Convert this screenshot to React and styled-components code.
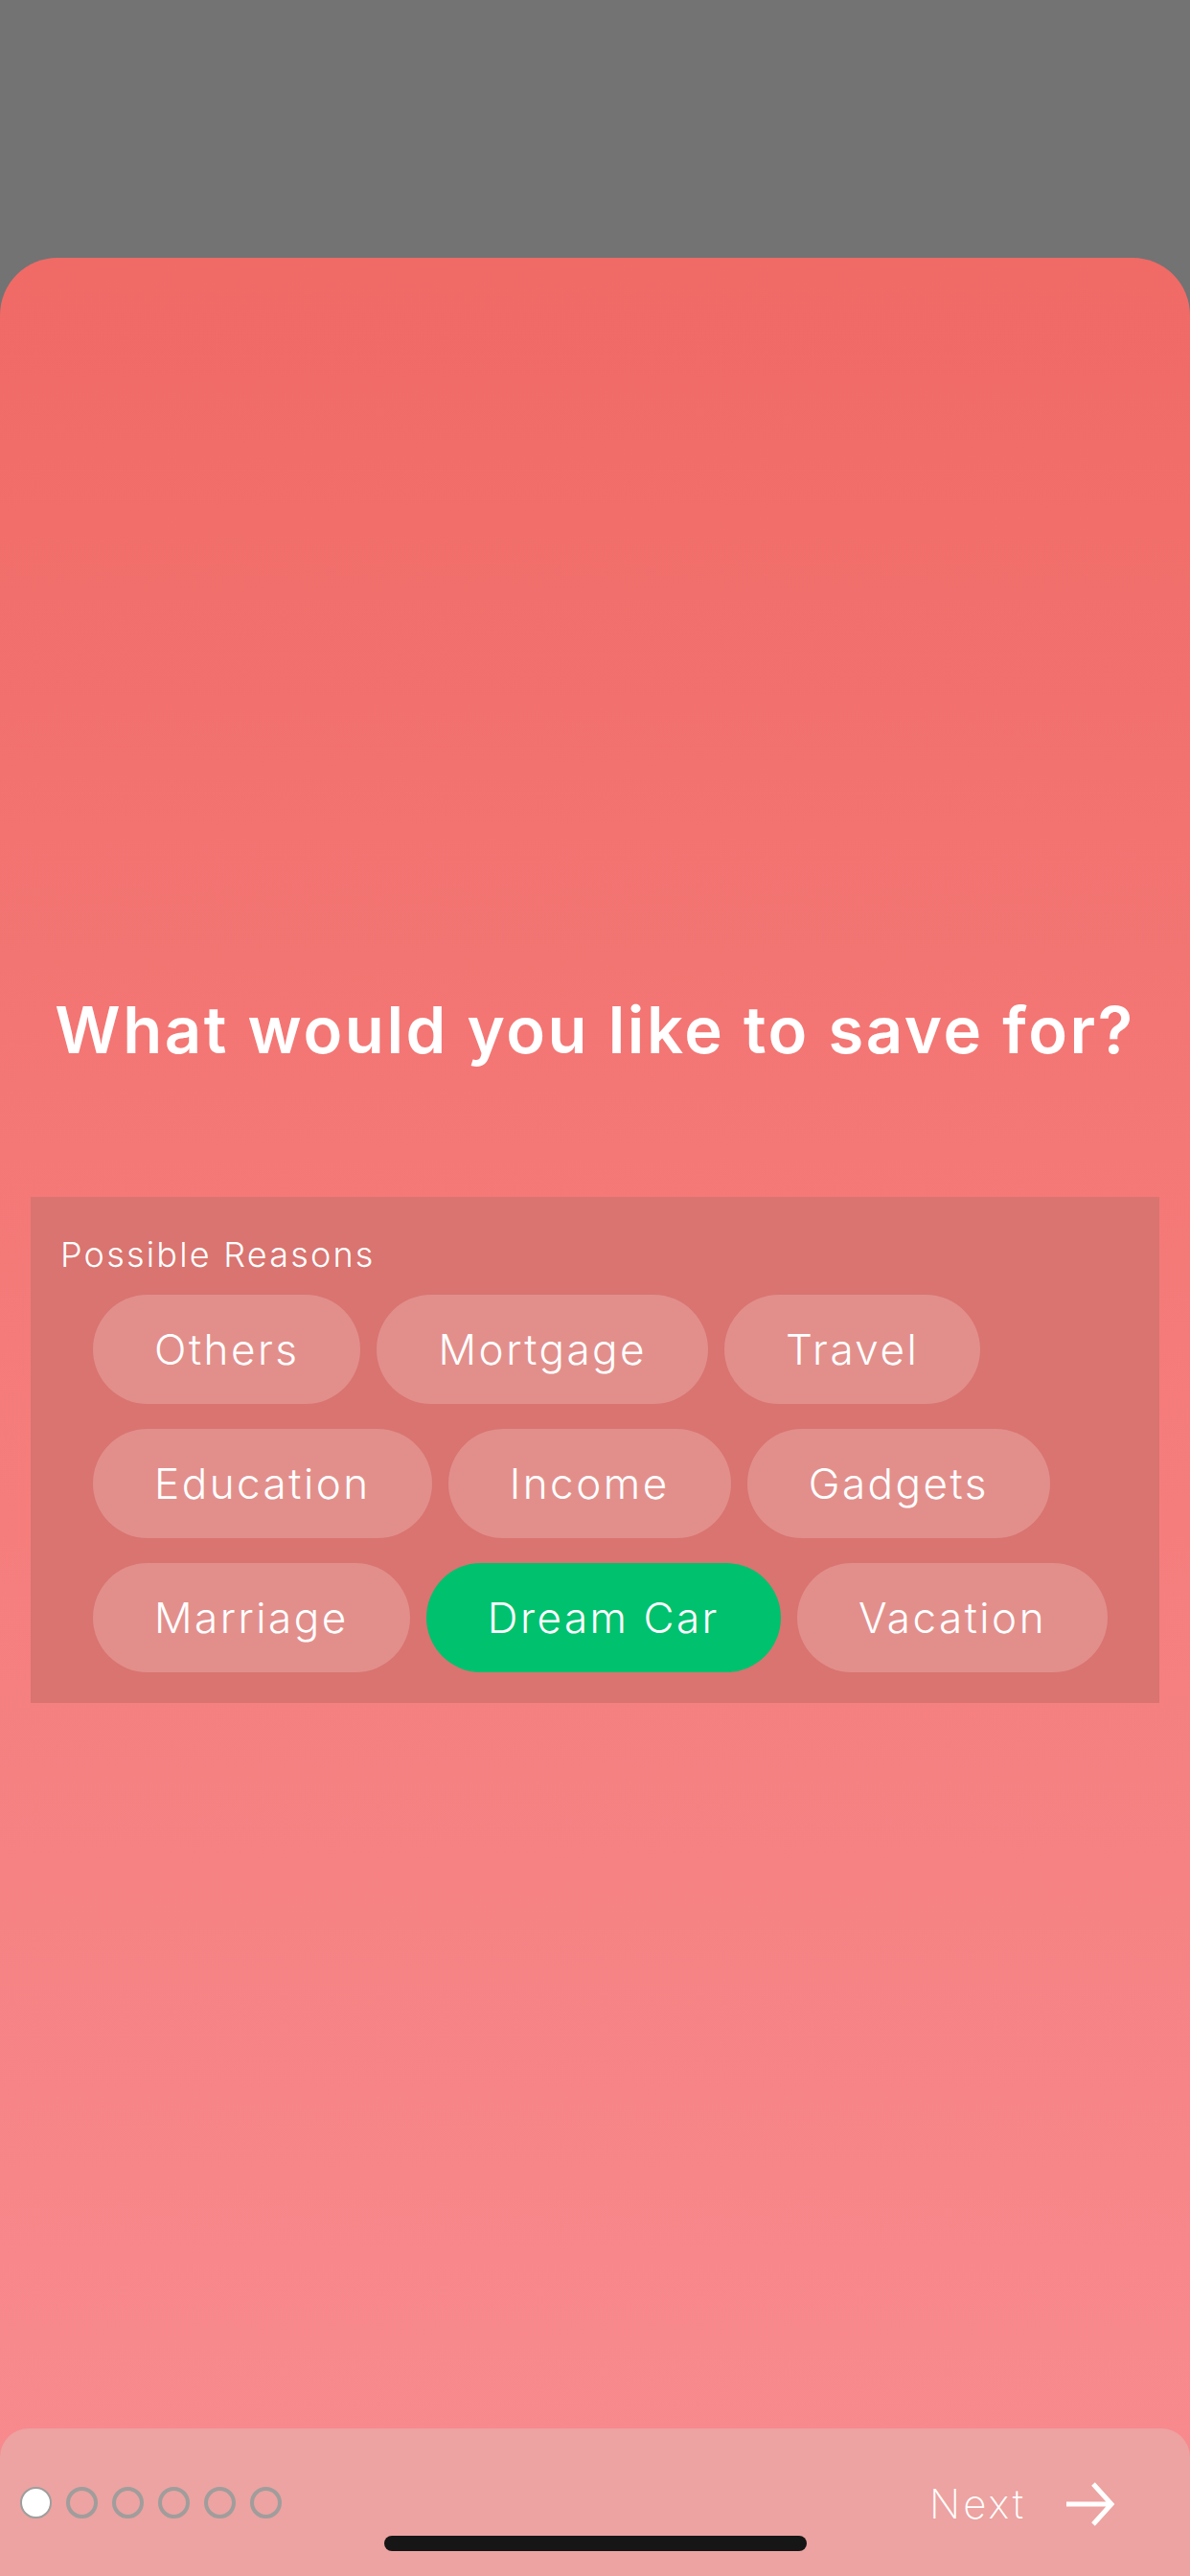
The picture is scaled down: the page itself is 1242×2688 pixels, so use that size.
import React, { useState } from "react";
import styled, { createGlobalStyle } from "styled-components";

const reasons = [
  "Others",
  "Mortgage",
  "Travel",
  "Education",
  "Income",
  "Gadgets",
  "Marriage",
  "Dream Car",
  "Vacation",
];

const App = () => {
  const [selected, setSelected] = useState("Dream Car");

  return (
    <>
      <GlobalStyle />
      <Screen>
        <Card>
          <Title>What would you like to save for?</Title>

          <ReasonsPanel>
            <PanelLabel>Possible Reasons</PanelLabel>
            <ChipList>
              {reasons.map((reason) => (
                <Chip
                  key={reason}
                  $active={reason === selected}
                  onClick={() => setSelected(reason)}
                >
                  {reason}
                </Chip>
              ))}
            </ChipList>
          </ReasonsPanel>

          <Footer>
            <Dots>
              {[0, 1, 2, 3, 4, 5].map((i) => (
                <Dot key={i} $active={i === 0} />
              ))}
            </Dots>
            <NextButton>
              Next
              <svg width="54" height="50" viewBox="0 0 54 50" fill="none">
                <path
                  d="M2 25 H48 M30 4 L49 25 L30 46"
                  stroke="#fff"
                  strokeWidth="5"
                  strokeLinecap="butt"
                  strokeLinejoin="miter"
                />
              </svg>
            </NextButton>
            <HomeIndicator />
          </Footer>
        </Card>
      </Screen>
    </>
  );
};

const GlobalStyle = createGlobalStyle`
  html, body {
    margin: 0;
    padding: 0;
    background: #737373;
  }
  * {
    box-sizing: border-box;
  }
`;

const Screen = styled.div`
  width: 1242px;
  height: 2688px;
  padding-top: 269px;
  background: #737373;
  font-family: Inter, "Open Sans", sans-serif;
  overflow: hidden;
`;

const Card = styled.div`
  height: 100%;
  display: flex;
  flex-direction: column;
  border-radius: 60px 60px 0 0;
  background: linear-gradient(to bottom, #f06a66 0%, #f57e7d 55%, #f88b90 100%);
  padding-top: 766px;
`;

const Title = styled.h1`
  margin: 0;
  text-align: center;
  color: #fff;
  font-size: 67px;
  line-height: 80px;
  font-weight: 600;
  letter-spacing: 2.6px;
`;

const ReasonsPanel = styled.div`
  margin: 134px 32px 0;
  padding: 38px 32px 32px 31px;
  background: #d97470;
`;

const PanelLabel = styled.div`
  color: #fff;
  font-size: 36px;
  line-height: 44px;
  font-weight: 300;
  letter-spacing: 2.2px;
`;

const ChipList = styled.div`
  display: flex;
  flex-wrap: wrap;
  gap: 26px 17px;
  margin-top: 20px;
  padding-left: 34px;
`;

const Chip = styled.button`
  height: 114px;
  padding: 0 64px;
  border: none;
  border-radius: 57px;
  background: ${({ $active }) => ($active ? "#00c16e" : "#e28f8c")};
  color: #fff;
  font-family: inherit;
  font-size: 44px;
  font-weight: 300;
  letter-spacing: 2.5px;
  cursor: pointer;
`;

const Footer = styled.div`
  position: relative;
  margin-top: auto;
  height: 154px;
  display: flex;
  align-items: flex-start;
  justify-content: space-between;
  padding: 61px 77px 0 21px;
  border-radius: 30px 30px 0 0;
  background: #eca3a1;
`;

const Dots = styled.div`
  display: flex;
  gap: 15px;
`;

const Dot = styled.span`
  width: 33px;
  height: 33px;
  border-radius: 50%;
  border: ${({ $active }) => ($active ? "2px solid #9e9e9e" : "4px solid #a09d9c")};
  background: ${({ $active }) => ($active ? "#fff" : "transparent")};
`;

const NextButton = styled.div`
  display: flex;
  align-items: center;
  gap: 40px;
  margin-top: -8px;
  color: #fff;
  font-size: 42px;
  font-weight: 200;
  letter-spacing: 3px;
`;

const HomeIndicator = styled.div`
  position: absolute;
  left: 401px;
  top: 112px;
  width: 441px;
  height: 16px;
  border-radius: 8px;
  background: #161616;
`;

export default App;
